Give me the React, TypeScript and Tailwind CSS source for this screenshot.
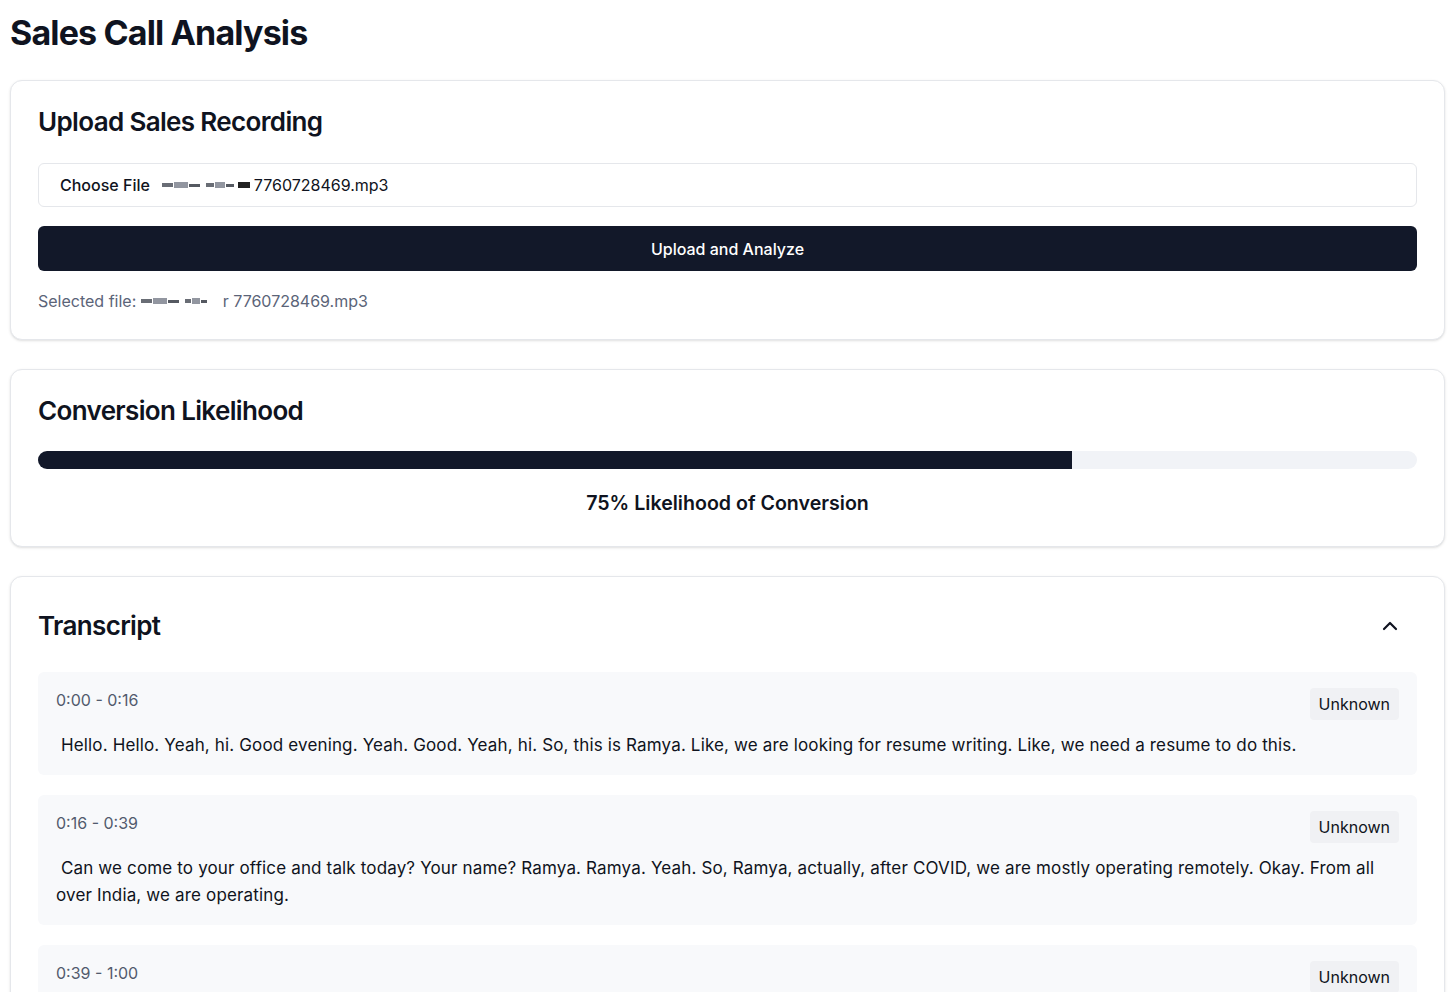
import { ChevronUp } from "lucide-react";

const SEGMENTS = [
  {
    start: "0:00",
    end: "0:16",
    speaker: "Unknown",
    text: "Hello. Hello. Yeah, hi. Good evening. Yeah. Good. Yeah, hi. So, this is Ramya. Like, we are looking for resume writing. Like, we need a resume to do this.",
  },
  {
    start: "0:16",
    end: "0:39",
    speaker: "Unknown",
    text: "Can we come to your office and talk today? Your name? Ramya. Ramya. Yeah. So, Ramya, actually, after COVID, we are mostly operating remotely. Okay. From all over India, we are operating.",
  },
  {
    start: "0:39",
    end: "1:00",
    speaker: "Unknown",
    text: "Okay. So, how does it work? Like, we share the details and you prepare the resume? Yes, we will have a call with you and understand your profile first.",
  },
];

const LIKELIHOOD = 75;

// pixelated blob standing in for the blurred part of the file name
function Redacted({ widths }: { widths: number[] }) {
  return (
    <span className="inline-flex items-center gap-[6px] align-middle">
      {widths.map((w, i) => (
        <span key={i} className="inline-flex items-center gap-[1px]">
          <span className="h-[4px] bg-[#2a2f3a] opacity-70" style={{ width: w * 0.3 }} />
          <span className="h-[6px] bg-[#4a5060] opacity-60" style={{ width: w * 0.4 }} />
          <span className="h-[3px] bg-[#2a2f3a] opacity-80" style={{ width: w * 0.3 }} />
        </span>
      ))}
    </span>
  );
}

export default function App() {
  return (
    <div
      className="min-h-screen bg-white pl-[10px] pr-[11px] text-[#0f1320]"
      style={{ fontFamily: "Inter, 'Noto Sans', sans-serif" }}
    >
      <h1 className="pt-[13px] pb-[27px] text-[34px] font-bold leading-[40px] tracking-tight">
        Sales Call Analysis
      </h1>

      <div className="flex flex-col gap-[29px]">
        <div className="rounded-xl border border-gray-200 bg-white px-[27px] pt-[25px] pb-[26px] shadow-sm">
          <h2 className="text-[26px] font-semibold leading-8 tracking-tight">Upload Sales Recording</h2>
          <div className="mt-[25px] flex h-[44px] items-center rounded-md border border-gray-200 px-[21px] text-base">
            <span className="font-medium">Choose File</span>
            <span className="ml-[12px] flex items-center gap-1">
              <Redacted widths={[36, 26]} />
              <span className="inline-block h-[6px] w-[12px] bg-[#222]" />
              <span>7760728469.mp3</span>
            </span>
          </div>
          <button className="mt-[19px] flex h-[45px] w-full items-center justify-center rounded-md bg-[#121829] text-base font-medium text-white">
            Upload and Analyze
          </button>
          <p className="mt-[18px] flex items-center text-base text-[#5b6478]">
            Selected file:&nbsp;
            <Redacted widths={[36, 20]} />
            <span className="ml-[16px]">r 7760728469.mp3</span>
          </p>
        </div>

        <div className="rounded-xl border border-gray-200 bg-white px-[27px] pt-[25px] pb-[29px] shadow-sm">
          <h2 className="text-[26px] font-semibold leading-8 tracking-tight">Conversion Likelihood</h2>
          <div className="mt-[24px] h-[18px] w-full overflow-hidden rounded-full bg-[#f1f3f7]">
            <div className="h-full bg-[#121829]" style={{ width: `${LIKELIHOOD}%` }} />
          </div>
          <p className="mt-[20px] text-center text-[19.6px] font-semibold leading-7">
            {LIKELIHOOD}% Likelihood of Conversion
          </p>
        </div>

        <div className="rounded-xl border border-gray-200 bg-white px-[27px] pt-[33px] shadow-sm">
          <div className="flex items-center justify-between">
            <h2 className="text-[26px] font-semibold leading-8 tracking-tight">Transcript</h2>
            <ChevronUp className="mr-[15px] h-6 w-6" strokeWidth={2.2} />
          </div>
          <div className="mt-[30px] flex flex-col gap-5">
            {SEGMENTS.map((s, i) => (
              <div key={i} className="rounded-md bg-[#f8f9fb] px-[18px] py-4">
                <div className="flex items-start justify-between">
                  <span className="text-base leading-6 text-[#525b6d]">
                    {s.start} - {s.end}
                  </span>
                  <span className="rounded bg-[#f0f1f4] px-[9px] py-1 text-base leading-6">{s.speaker}</span>
                </div>
                <p className="mt-3 text-[17px] leading-[27px] tracking-[0.15px]">{"\u00a0" + s.text}</p>
              </div>
            ))}
          </div>
        </div>
      </div>
    </div>
  );
}
